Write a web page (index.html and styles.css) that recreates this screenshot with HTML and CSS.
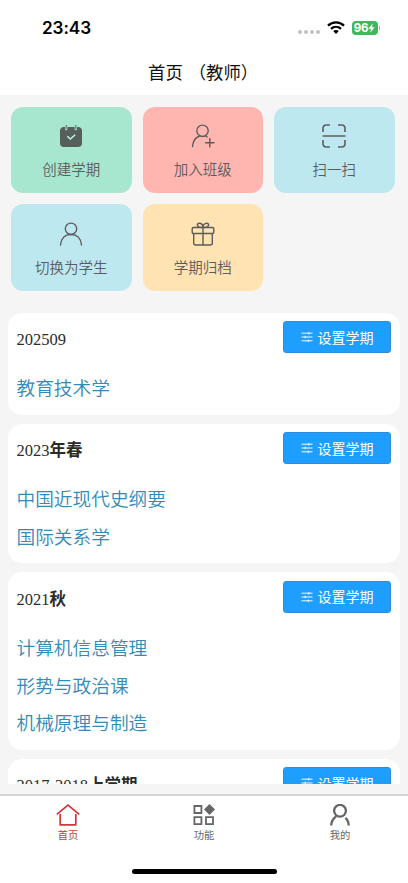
FILE: index.html
```html
<!DOCTYPE html>
<html lang="zh-CN">
<head>
<meta charset="utf-8">
<meta name="viewport" content="width=device-width, initial-scale=1">
<title>首页（教师）</title>
<link rel="stylesheet" href="styles.css">
</head>
<body>
<svg class="defs" aria-hidden="true">
  <symbol id="sliders" viewBox="0 0 12 12"><path d="M.5 2.2h11M.5 6h11M.5 9.8h11M7.8.9v2.6M4.2 4.7v2.6M7.3 8.5v2.6" fill="none" stroke="currentColor" stroke-width=".95"/></symbol>
</svg>
<div class="app">
  <header class="header">
    <div class="status">
      <span class="time">23:43</span>
      <div class="indicators">
        <span class="dots"><i></i><i></i><i></i><i></i></span>
        <svg class="wifi" viewBox="0 0 18 13"><g fill="none" stroke="#000" stroke-width="2.3"><path d="M1 4.7C5.6.3 12.4.3 17 4.7"/><path d="M4 7.9c3-2.8 7-2.8 10 0"/></g><path d="M6.2 10.1c1.7-1.4 3.9-1.4 5.6 0L9 13z"/></svg>
        <span class="battery">96<svg viewBox="0 0 7 10"><path d="M4.7.3.4 5.7h2.5L2.3 9.7l4.3-5.5H4z" fill="#fff"/></svg></span><i class="cap"></i>
      </div>
    </div>
    <h1 class="title">首页 （教师）</h1>
  </header>
  <main class="content">
    <nav class="tiles">
      <a class="tile green">
        <svg viewBox="0 0 24 24"><path d="M5 3h1v2a1.2 1.2 0 0 0 2.400 0V3h7.200v2a1.200 1.200 0 0 0 2.400 0V3h1a3.800 3.800 0 0 1 4 4v12a4 4 0 0 1-4 4H5a4 4 0 0 1-4-4V7a3.800 3.800 0 0 1 4-4z" fill="#555f5b"/><path d="M7.200 1v4M16.800 1v4" stroke="#555f5b" stroke-width="1"/><path d="m8.300 12.200 3 2.900 4.900-4.400" fill="none" stroke="#c5f4e3" stroke-width="1.500"/></svg>
        <span>创建学期</span>
      </a>
      <a class="tile pink">
        <svg viewBox="0 0 24 24"><g class="line"><circle cx="11.500" cy="6.800" r="5.700"/><path d="M1.500 22.500c.3-5.800 3-9 7.100-10.500M14.700 12.200l1.500.8M18.800 14.500v8.400M14.600 18.700h8.400"/></g></svg>
        <span>加入班级</span>
      </a>
      <a class="tile blue">
        <svg viewBox="0 0 24 24"><g class="line heavy"><path d="M1 8V4.500Q1 1 4.500 1H8M16 1h3.500Q23 1 23 4.500V8M1 16v3.500Q1 23 4.500 23H8M16 23h3.500q3.500 0 3.500-3.500V16M.5 12h23"/></g></svg>
        <span>扫一扫</span>
      </a>
      <a class="tile blue">
        <svg viewBox="0 0 24 24"><g class="line"><circle cx="12" cy="6.800" r="5.700"/><path d="M1.500 23c.5-6.500 4.500-10.500 10.500-10.500S22 16.500 22.500 23"/></g></svg>
        <span>切换为学生</span>
      </a>
      <a class="tile yellow">
        <svg viewBox="0 0 24 24"><g class="line"><rect x="1.200" y="5.500" width="21.600" height="6" rx="1.200"/><path d="M2.700 11.500V21q0 2 2 2h14.600q2 0 2-2v-9.500M12 5.500V23M12 5.500C5 6 5.500 1.300 8.200 1.300S12 3.500 12 5.500C12 3.500 13.100 1.300 15.800 1.300S19 6 12 5.500"/></g></svg>
        <span>学期归档</span>
      </a>
    </nav>
    <section class="card">
      <div class="card-head"><h2>202509</h2><button><svg><use href="#sliders"/></svg>设置学期</button></div>
      <a class="course">教育技术学</a>
    </section>
    <section class="card">
      <div class="card-head"><h2>2023<b>年春</b></h2><button><svg><use href="#sliders"/></svg>设置学期</button></div>
      <a class="course">中国近现代史纲要</a>
      <a class="course">国际关系学</a>
    </section>
    <section class="card">
      <div class="card-head"><h2>2021<b>秋</b></h2><button><svg><use href="#sliders"/></svg>设置学期</button></div>
      <a class="course">计算机信息管理</a>
      <a class="course">形势与政治课</a>
      <a class="course">机械原理与制造</a>
    </section>
    <section class="card">
      <div class="card-head"><h2>2017-2018<b>上学期</b></h2><button><svg><use href="#sliders"/></svg>设置学期</button></div>
    </section>
  </main>
  <footer class="footer">
    <nav class="tabs">
      <a class="tab active"><svg viewBox="0 0 24 22"><path d="M.8 10.300 12 1.200l11.200 9.100M4.200 10v10.800h15.600V10" fill="none" stroke="currentColor" stroke-width="1.700"/></svg>首页</a>
      <a class="tab"><svg viewBox="0 0 24 22"><g fill="none" stroke="currentColor" stroke-width="1.800"><path d="M2.400 2h7v7h-7zM2.400 13.200h7v7h-7zM14 13.200h7v7h-7z"/></g><path d="m17.500 0 5.500 5.500-5.500 5.500L12 5.500z" fill="currentColor"/></svg>功能</a>
      <a class="tab"><svg viewBox="0 0 24 22"><g fill="none" stroke="currentColor" stroke-width="2.300"><circle cx="12" cy="6.800" r="5.900"/><path d="M3.200 21.500c.1-3.900 1.800-6.900 4.900-9M17.500 13.700c2 2 3.100 4.500 3.300 7.800"/></g></svg>我的</a>
    </nav>
    <div class="home-bar"></div>
  </footer>
</div>
</body>
</html>
```

FILE: styles.css
```css
* { box-sizing: border-box; }
body {
  margin: 0;
  font-family: "Liberation Sans", "Noto Sans CJK SC", sans-serif;
  background: #fff;
}
h1, h2 { margin: 0; font-weight: 400; }
.defs { display: none; }
.app {
  height: 883px;
  display: flex;
  flex-direction: column;
  overflow: hidden;
  background: #f5f5f5;
}
.header { height: 95px; flex: none; background: #fff; }
.status {
  height: 54px;
  padding: 1px 28px 0 42px;
  display: flex;
  align-items: center;
  justify-content: space-between;
}
.time { font: 600 17.2px/20px Inter, sans-serif; letter-spacing: -.1px; }
.indicators { display: flex; align-items: center; }
.dots { display: flex; gap: 1.700px; margin: 9px 7px 0 0; }
.dots i { width: 4px; height: 4px; border-radius: 50%; background: #c2c2c2; }
.wifi { width: 18px; height: 13px; margin-right: 7px; }
.battery {
  width: 26px;
  height: 14px;
  border-radius: 4px;
  background: #40b75c;
  color: #fff;
  font: 700 11.500px/14px Inter, sans-serif;
  letter-spacing: -.2px;
  display: flex;
  align-items: center;
  justify-content: center;
}
.battery svg { width: 7px; height: 10px; }
.cap { width: 1.500px; height: 4px; margin-left: 1px; border-radius: 0 2px 2px 0; background: #aaa; }
.title {
  font-family: "Noto Sans CJK SC", sans-serif;
  font-size: 17.400px;
  line-height: 35px;
  padding-left: 148px;
  white-space: nowrap;
  word-spacing: 2px;
  color: #111;
}
.content {
  height: 689px;
  flex: none;
  overflow: hidden;
  padding: 11.500px 8px 0;
}
.tiles {
  display: grid;
  grid-template-columns: repeat(3, 120.500px);
  grid-auto-rows: 86.500px;
  gap: 11px;
  padding: 0 3px;
  margin-bottom: 22px;
}
.tile {
  border-radius: 12px;
  display: flex;
  flex-direction: column;
  align-items: center;
  padding-top: 17.500px;
  gap: 10px;
  color: #5c5c5c;
  font: 350 14.500px/22px "Noto Sans CJK SC", sans-serif;
}
.tile svg { width: 24px; height: 24px; overflow: visible; }
.green { background: #a7e7cf; }
.pink { background: #ffb6b1; }
.blue { background: #bee8f0; }
.yellow { background: #ffe3b3; }
.line { fill: none; stroke: #5c5c5c; stroke-width: 1.400; stroke-linecap: round; stroke-linejoin: round; }
.heavy { stroke-width: 1.600; stroke-linecap: butt; }
.card {
  width: 391.500px;
  margin-bottom: 8.800px;
  padding: 8.500px 8.500px 8.900px;
  border-radius: 14px;
  background: #fff;
}
.card-head { display: flex; justify-content: space-between; height: 47.300px; }
h2 {
  font: 16.500px/37.500px "Liberation Serif", "Noto Sans CJK SC", serif;
  color: #2b2b2b;
}
button {
  width: 108px;
  height: 32px;
  padding: 0;
  border: 1px solid #2f8edb;
  border-radius: 3px;
  background: #1e9fff;
  color: #fff;
  display: flex;
  align-items: center;
  justify-content: center;
  gap: 5px;
  font: 14px/29px "Noto Sans CJK SC", sans-serif;
}
button svg { width: 12px; height: 12px; }
.course {
  display: block;
  font: 350 18.700px/37.600px "Noto Sans CJK SC", sans-serif;
  color: #338ab7;
}
.footer {
  height: 89px;
  margin-top: 10px;
  flex: none;
  border-top: 2px solid #d2d4d6;
  background: #fff;
  display: flex;
  flex-direction: column;
  align-items: center;
}
.tabs { width: 100%; height: 73px; display: grid; grid-template-columns: repeat(3, 1fr); }
.tab {
  display: flex;
  flex-direction: column;
  align-items: center;
  padding-top: 8px;
  gap: 1px;
  font: 10.300px/16px "Noto Sans CJK SC", sans-serif;
  color: #666;
}
.tab svg { width: 24px; height: 22px; }
.active { color: #cb3a38; }
.home-bar { width: 145px; height: 5px; border-radius: 3px; background: #000; }
```
